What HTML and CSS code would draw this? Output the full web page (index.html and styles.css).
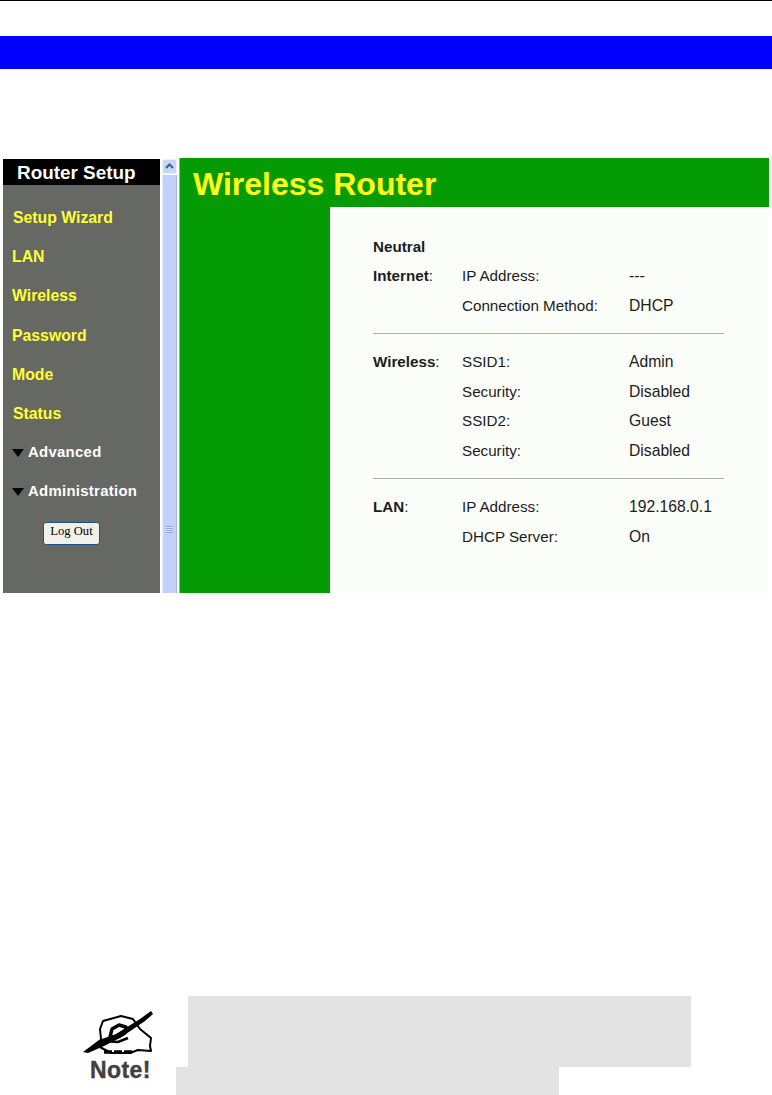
FILE: index.html
```html
<!DOCTYPE html>
<html lang="en">
<head>
    <meta charset="UTF-8">
    <title>Wireless Router</title>
    <link rel="stylesheet" href="styles.css">
</head>
<body>
    <div class="top-rule"></div>
    <div class="blue-band"></div>

    <div class="shot">
        <div class="sidebar">
            <div class="side-title">Router Setup</div>
            <ul class="side-nav">
                <li class="nudge">Setup Wizard</li>
                <li>LAN</li>
                <li>Wireless</li>
                <li>Password</li>
                <li>Mode</li>
                <li class="nudge">Status</li>
                <li class="sub"><span class="arrow"></span>Advanced</li>
                <li class="sub"><span class="arrow"></span>Administration</li>
            </ul>
            <button class="logout">Log Out</button>
        </div>

        <div class="scrollbar">
            <div class="scroll-btn">
                <svg width="13" height="13" viewBox="0 0 13 13"><path d="M3 8 L6.5 4.5 L10 8" fill="none" stroke="#3d5f8f" stroke-width="2"/></svg>
            </div>
            <div class="scroll-thumb">
                <span class="grip"></span>
            </div>
        </div>

        <div class="main">
            <div class="main-title">Wireless Router</div>
            <div class="main-body">
                <div class="green-col"></div>
                <div class="panel">
                    <div class="row"><b>Neutral</b></div>
                    <div class="row"><span><b>Internet</b>:</span><span>IP Address:</span><span class="val">---</span></div>
                    <div class="row"><span></span><span>Connection Method:</span><span class="val">DHCP</span></div>
                    <hr class="sep">
                    <div class="row"><span><b>Wireless</b>:</span><span>SSID1:</span><span class="val">Admin</span></div>
                    <div class="row"><span></span><span>Security:</span><span class="val">Disabled</span></div>
                    <div class="row"><span></span><span>SSID2:</span><span class="val">Guest</span></div>
                    <div class="row"><span></span><span>Security:</span><span class="val">Disabled</span></div>
                    <hr class="sep">
                    <div class="row"><span><b>LAN</b>:</span><span>IP Address:</span><span class="val">192.168.0.1</span></div>
                    <div class="row"><span></span><span>DHCP Server:</span><span class="val">On</span></div>
                </div>
            </div>
        </div>
    </div>

    <div class="note">
        <div class="note-icon">
            <svg width="74" height="48" viewBox="0 0 74 48">
                <!-- hand -->
                <path d="M18 19 L21 11 L39 6 L51 9 L58 19 L69 28 L68 36 L69 41 L56 40 L48 43 L29 43 L16 36 L19 29 Z" fill="#fff" stroke="#000" stroke-width="2" stroke-linejoin="round"/>
                <!-- fingers -->
                <path d="M28 27 L30 19 L37 15 L44 17 L43 23 L36 27 Z" fill="#fff" stroke="#000" stroke-width="3.4" stroke-linejoin="round"/>
                <path d="M19 31 L36 32 L46 28" fill="none" stroke="#000" stroke-width="2.6"/>
                <path d="M22 42 L50 42" fill="none" stroke="#000" stroke-width="3.4" stroke-dasharray="8 2"/>
                <!-- pen -->
                <path d="M1 42 L17 30 L34 24 L58 9 L69 1 L71 4 L63 11 L38 28 L22 36 L6 43 Z" fill="#000"/>
            </svg>
        </div>
        <div class="note-label">Note!</div>
        <div class="note-grey-a"></div>
        <div class="note-grey-b"></div>
    </div>
</body>
</html>
```

FILE: styles.css
```css
*{
    margin: 0;
    padding: 0;
    box-sizing: border-box;
}
html,body{
    height: 1095px;
    overflow: hidden;
}
body{
    background-color: #fff;
    font-family: "Liberation Sans", Arial, sans-serif;
    color: #000;
    font-size: 15.2px;
}
.top-rule{
    height: 1px;
    background-color: #000;
}
.blue-band{
    height: 33px;
    margin-top: 35px;
    background-color: #0000ff;
}
.shot{
    display: flex;
    width: 766px;
    height: 435px;
    margin: 89px 0 0 3px;
    background-color: #fff;
}

/* left menu */
.sidebar{
    width: 157px;
    background-color: #666864;
    margin-top: 1px;
}
.side-title{
    height: 26px;
    line-height: 27px;
    background-color: #000;
    color: #fff;
    font-size: 18.9px;
    font-weight: bold;
    padding-left: 14px;
}
.side-nav{
    list-style: none;
    padding-top: 13px;
}
.side-nav li{
    height: 39.2px;
    line-height: 39.2px;
    padding-left: 9px;
    color: #ffff33;
    font-size: 15.8px;
    font-weight: bold;
}
.side-nav .nudge{
    padding-left: 10px;
}
.side-nav .sub{
    display: flex;
    align-items: center;
    color: #fff;
    font-size: 14.9px;
    letter-spacing: .3px;
}
.arrow{
    width: 0;
    height: 0;
    margin: 0 4px 0 0;
    border-left: 6px solid transparent;
    border-right: 6px solid transparent;
    border-top: 8px solid #000;
}
.logout{
    display: block;
    width: 57px;
    height: 23px;
    margin: 10px 0 0 40px;
    border: 1px solid #1c5180;
    border-radius: 3px;
    background-color: #f1f1ea;
    font-family: "Liberation Serif", serif;
    font-size: 12.6px;
    padding-bottom: 3px;
    color: #000;
}

/* scroll bar */
.scrollbar{
    width: 20px;
    display: flex;
    flex-direction: column;
    padding: 1px 2px 0 2px;
    background-color: #fff;
    border-right: 1px solid #a8a8a0;
}
.scroll-btn{
    height: 15px;
    background-color: #c6d6f6;
    border: 1px solid #e9effc;
    border-radius: 2px;
    display: flex;
    align-items: center;
    justify-content: center;
}
.scroll-thumb{
    flex: 1;
    margin-top: 1px;
    padding-bottom: 60px;
    background-color: #c0d2fa;
    border-left: 1px solid #e6ecfb;
    border-right: 1px solid #9fb6e8;
    display: flex;
    align-items: flex-end;
    justify-content: center;
}
.grip{
    width: 7px;
    height: 7px;
    background: repeating-linear-gradient(#8fa6d6 0 1px, #dfe7fa 1px 2px);
}

/* right frame */
.main{
    width: 589px;
    display: flex;
    flex-direction: column;
    background-color: #059b05;
}
.main-title{
    height: 49px;
    padding-left: 13px;
    line-height: 53px;
    color: #ffff19;
    font-size: 32px;
    font-weight: bold;
}
.main-body{
    flex: 1;
    display: flex;
}
.green-col{
    width: 150px;
}
.panel{
    flex: 1;
    background-color: #fbfdf9;
    padding: 24.8px 45px 0 43px;
}
.row{
    display: grid;
    grid-template-columns: 89px 167px 1fr;
    align-items: baseline;
    height: 29.4px;
    line-height: 29.4px;
    color: #1c1c1c;
}
.val{
    font-size: 15.7px;
}
.sep{
    border: none;
    height: 1px;
    margin: 13px 0 13.4px;
    background-color: #b5b19f;
}

/* note at page bottom */
.note{
    position: relative;
    height: 99px;
    margin-top: 403px;
}
.note-icon{
    position: absolute;
    left: 82px;
    top: 14px;
}
.note-label{
    position: absolute;
    left: 90px;
    top: 61px;
    color: #404040;
    font-size: 23px;
    font-weight: bold;
    letter-spacing: .4px;
    -webkit-text-stroke: .4px #404040;
    line-height: 26px;
}
.note-grey-a{
    position: absolute;
    left: 188px;
    top: 0;
    width: 503px;
    height: 71px;
    background-color: #e3e3e3;
}
.note-grey-b{
    position: absolute;
    left: 176px;
    top: 71px;
    width: 383px;
    height: 28px;
    background-color: #e3e3e3;
}
```
